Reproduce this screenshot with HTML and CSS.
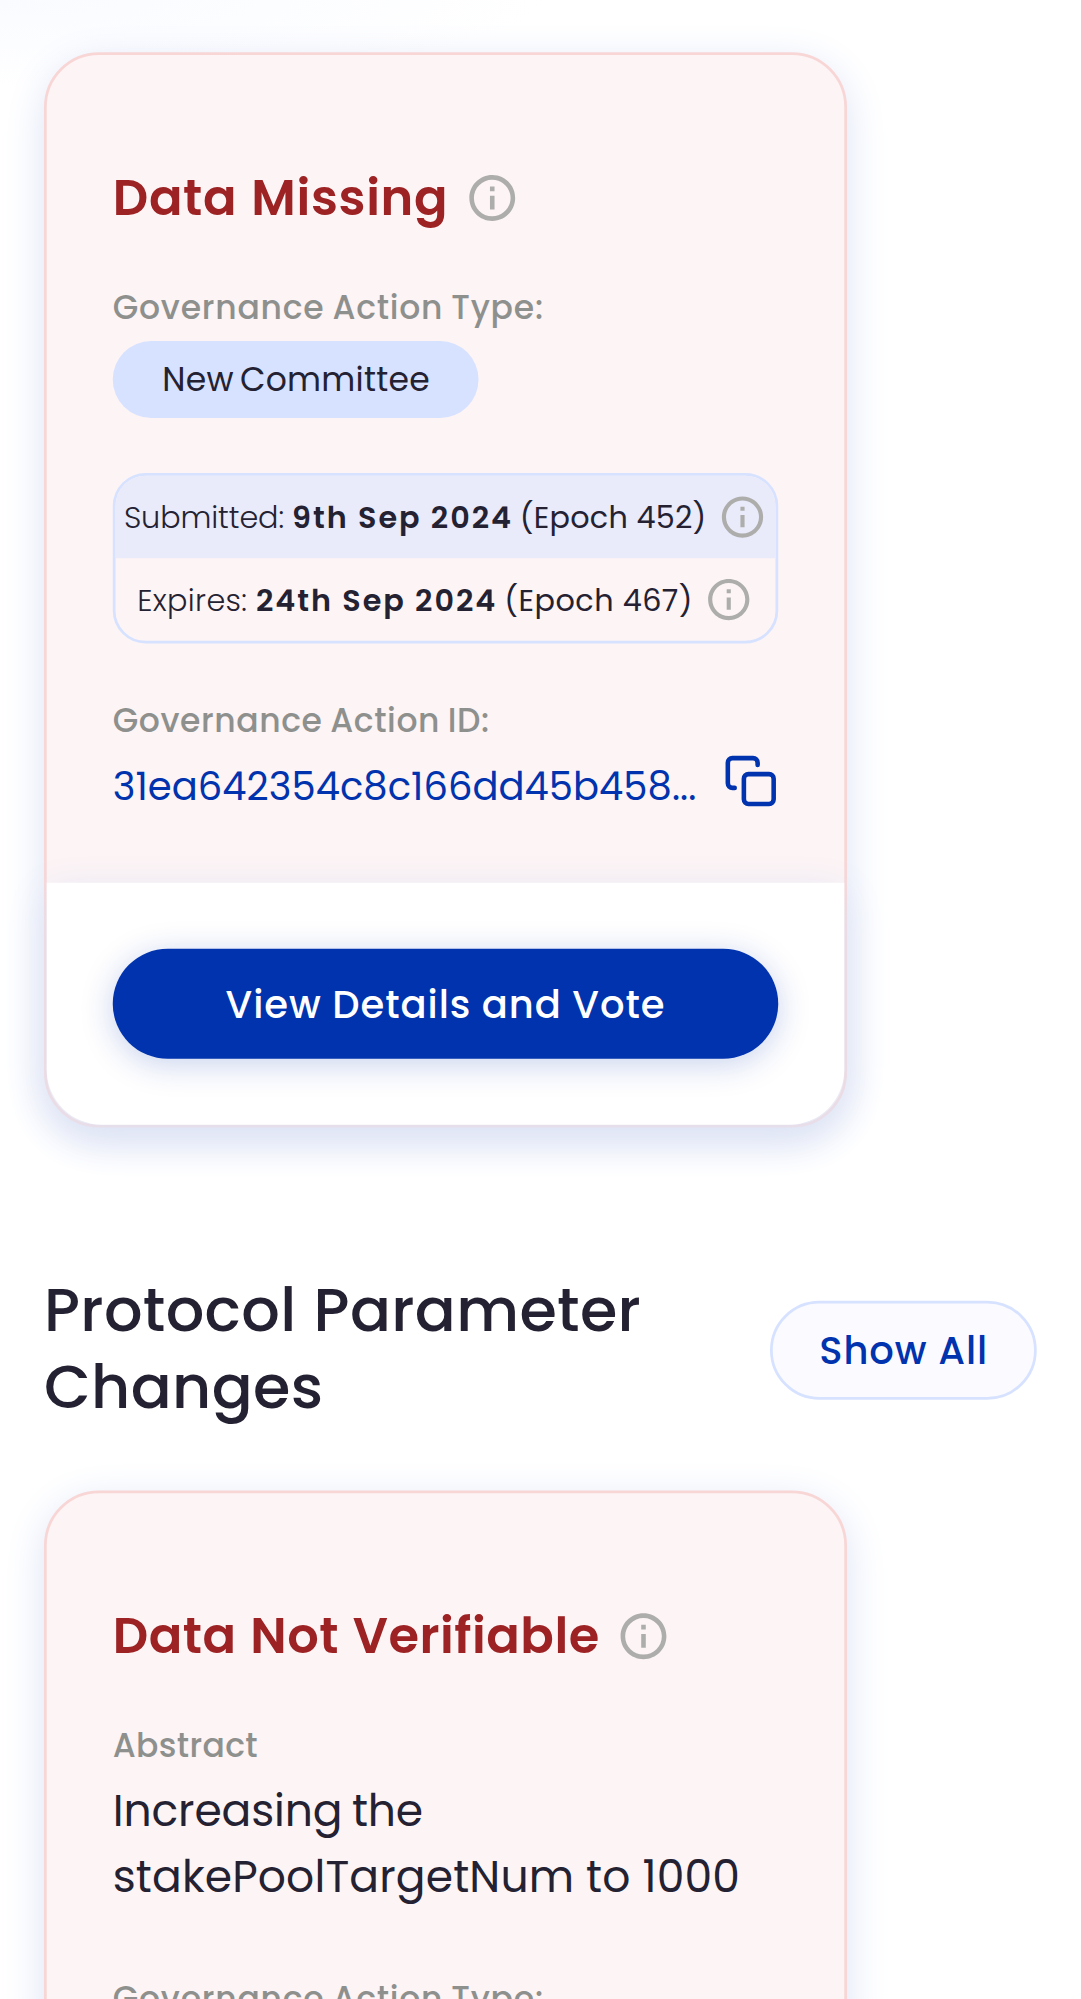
FILE: index.html
```html
<!DOCTYPE html>
<html lang="en">
<head>
<meta charset="utf-8">
<title>Governance Actions</title>
<link rel="stylesheet" href="styles.css">
</head>
<body>
<svg class="defs" aria-hidden="true">
  <symbol id="info" viewBox="0 0 24 24"><path fill="currentColor" d="M11 7h2v2h-2zm0 4h2v6h-2zm1-9C6.480 2 2 6.480 2 12s4.480 10 10 10 10-4.480 10-10S17.520 2 12 2zm0 18c-4.410 0-8-3.590-8-8s3.590-8 8-8 8 3.590 8 8-3.590 8-8 8z"/></symbol>
</svg>
<main class="page">
  <article class="card">
    <div class="card-body">
      <div class="title-row"><h3 class="card-title">Data Missing</h3><svg class="info"><use href="#info"/></svg></div>
      <p class="label">Governance Action Type:</p>
      <div class="tag">New Committee</div>
      <div class="timeline">
        <div class="timeline-row submitted"><p><span class="light">Submitted: </span><b>9th Sep 2024</b> (Epoch 452)</p><svg class="info small"><use href="#info"/></svg></div>
        <div class="timeline-row expires"><p><span class="light">Expires: </span><b>24th Sep 2024</b> (Epoch 467)</p><svg class="info small"><use href="#info"/></svg></div>
      </div>
      <p class="label id-label">Governance Action ID:</p>
      <div class="id-row"><span>31ea642354c8c166dd45b458...</span>
        <svg class="copy" viewBox="0 0 24 24"><rect x="9" y="9" width="13" height="13" rx="2"/><path d="M5 15H4a2 2 0 0 1-2-2V4a2 2 0 0 1 2-2h9a2 2 0 0 1 2 2v1"/></svg></div>
    </div>
    <footer class="card-footer"><button class="vote">View Details and Vote</button></footer>
  </article>
  <header class="section-head">
    <h2 class="heading">Protocol Parameter Changes</h2>
    <button class="show-all">Show All</button>
  </header>
  <article class="card">
    <div class="card-body">
      <div class="title-row"><h3 class="card-title long">Data Not Verifiable</h3><svg class="info"><use href="#info"/></svg></div>
      <p class="label short">Abstract</p>
      <p class="abstract"><span class="tight">Increasing the</span> stakePoolTargetNum to 1000</p>
      <p class="label next">Governance Action Type:</p>
    </div>
  </article>
</main>
</body>
</html>
```
FILE: styles.css
```css
* { box-sizing: border-box; }
html { overflow: hidden; }
body {
  margin: 0;
  height: 1999px;
  overflow: hidden;
  background: #fff;
  color: #242232;
  font-family: Poppins, Inter, "Open Sans", sans-serif;
}
h2, h3, p { margin: 0; }
button { font: inherit; padding: 0; }
.defs { position: absolute; width: 0; height: 0; }

/* The mobile layout is 393px wide and is shown at 2.75x. */
.page {
  width: 393.1px;
  height: 726.9px;
  padding: 19px 16px 0;
  overflow: hidden;
  transform: scale(2.75);
  transform-origin: 0 0;
  background: radial-gradient(ellipse 200px 32px at 0 0, #f9fbff 0%, #fff 100%) no-repeat;
}
.card {
  width: 292px;
  height: 390.8px;
  display: flex;
  flex-direction: column;
  border: 1px solid #f8d6d6;
  border-radius: 20px;
  background: #fdf4f5;
  box-shadow: 0 4px 15px #dde3f5;
}
.card-body { flex: 1; padding: 40px 24px 0; }
.title-row { display: flex; align-items: center; gap: 6.2px; height: 24px; }
.card-title { font-size: 18px; line-height: 24px; font-weight: 600; letter-spacing: .24px; word-spacing: .6px; color: #9c2224; }
.card-title.long { letter-spacing: .19px; word-spacing: .5px; }
.info { width: 20px; height: 20px; color: #adaeac; flex: none; }
.label { margin-top: 19.8px; font-size: 12px; line-height: 16px; font-weight: 500; letter-spacing: .28px; word-spacing: -.5px; color: #8e908e; }
.label.short { letter-spacing: .13px; }
.tag {
  width: 133px; height: 28px; margin-top: 4px; padding: 0 18px;
  border-radius: 14px; background: #d6e2ff; white-space: nowrap;
  font-size: 12px; line-height: 28px; letter-spacing: .09px; word-spacing: -1px;
}
.timeline {
  height: 62px; margin-top: 20px; overflow: hidden;
  border: 1px solid #d6e2ff; border-radius: 12px;
  font-size: 11px;
}
.timeline-row { display: flex; align-items: center; justify-content: center; gap: 4px; height: 30px; white-space: nowrap; }
.timeline-row p { padding-top: 2px; letter-spacing: .09px; }
.submitted { background: #e9eafa; }
.light { font-weight: 300; letter-spacing: -.04px; }
.timeline b { font-weight: 600; letter-spacing: .73px; margin-right: -.6px; }
.expires p { letter-spacing: .18px; }
.expires .light { letter-spacing: .12px; }
.small { width: 18px; height: 18px; }
.id-label { margin-top: 20px; letter-spacing: .21px; }
.id-row { display: flex; justify-content: space-between; margin-top: 4px; color: #0033ad; font-size: 14px; line-height: 20px; letter-spacing: .015px; }
.id-row span { padding-top: 2px; }
.copy { width: 20px; height: 20px; flex: none; fill: none; stroke: #0033ad; stroke-width: 2; stroke-linecap: round; stroke-linejoin: round; }
.card-footer {
  height: 88px; padding: 24px;
  border-radius: 0 0 20px 20px;
  background: #fff;
  box-shadow: 0 4px 15px #dde3f5;
}
.vote {
  width: 100%; height: 40px; padding-top: 1.6px; border: 0; border-radius: 20px;
  background: #0033ad; color: #fff; font-size: 14px; font-weight: 500; letter-spacing: .36px; word-spacing: -.25px;
  box-shadow: 0 2px 12px rgba(0, 51, 173, .22);
}
.section-head { display: flex; justify-content: space-between; align-items: center; margin: 52.4px 0 23.6px; }
.heading { width: 230px; padding-top: 1px; margin-bottom: -1px; font-size: 22px; line-height: 28px; font-weight: 500; letter-spacing: .12px; word-spacing: .4px; }
.show-all {
  width: 97px; height: 36px; margin-top: 2px;
  border: 1px solid #d6e2ff; border-radius: 18px;
  background: #fbfbff; color: #0033ad; font-size: 14px; font-weight: 500; letter-spacing: .32px;
}
.abstract { margin-top: 4px; font-size: 16px; line-height: 24px; letter-spacing: .055px; }
.tight { letter-spacing: -.04px; word-spacing: -.8px; }
.next { margin-top: 24px; }
```
